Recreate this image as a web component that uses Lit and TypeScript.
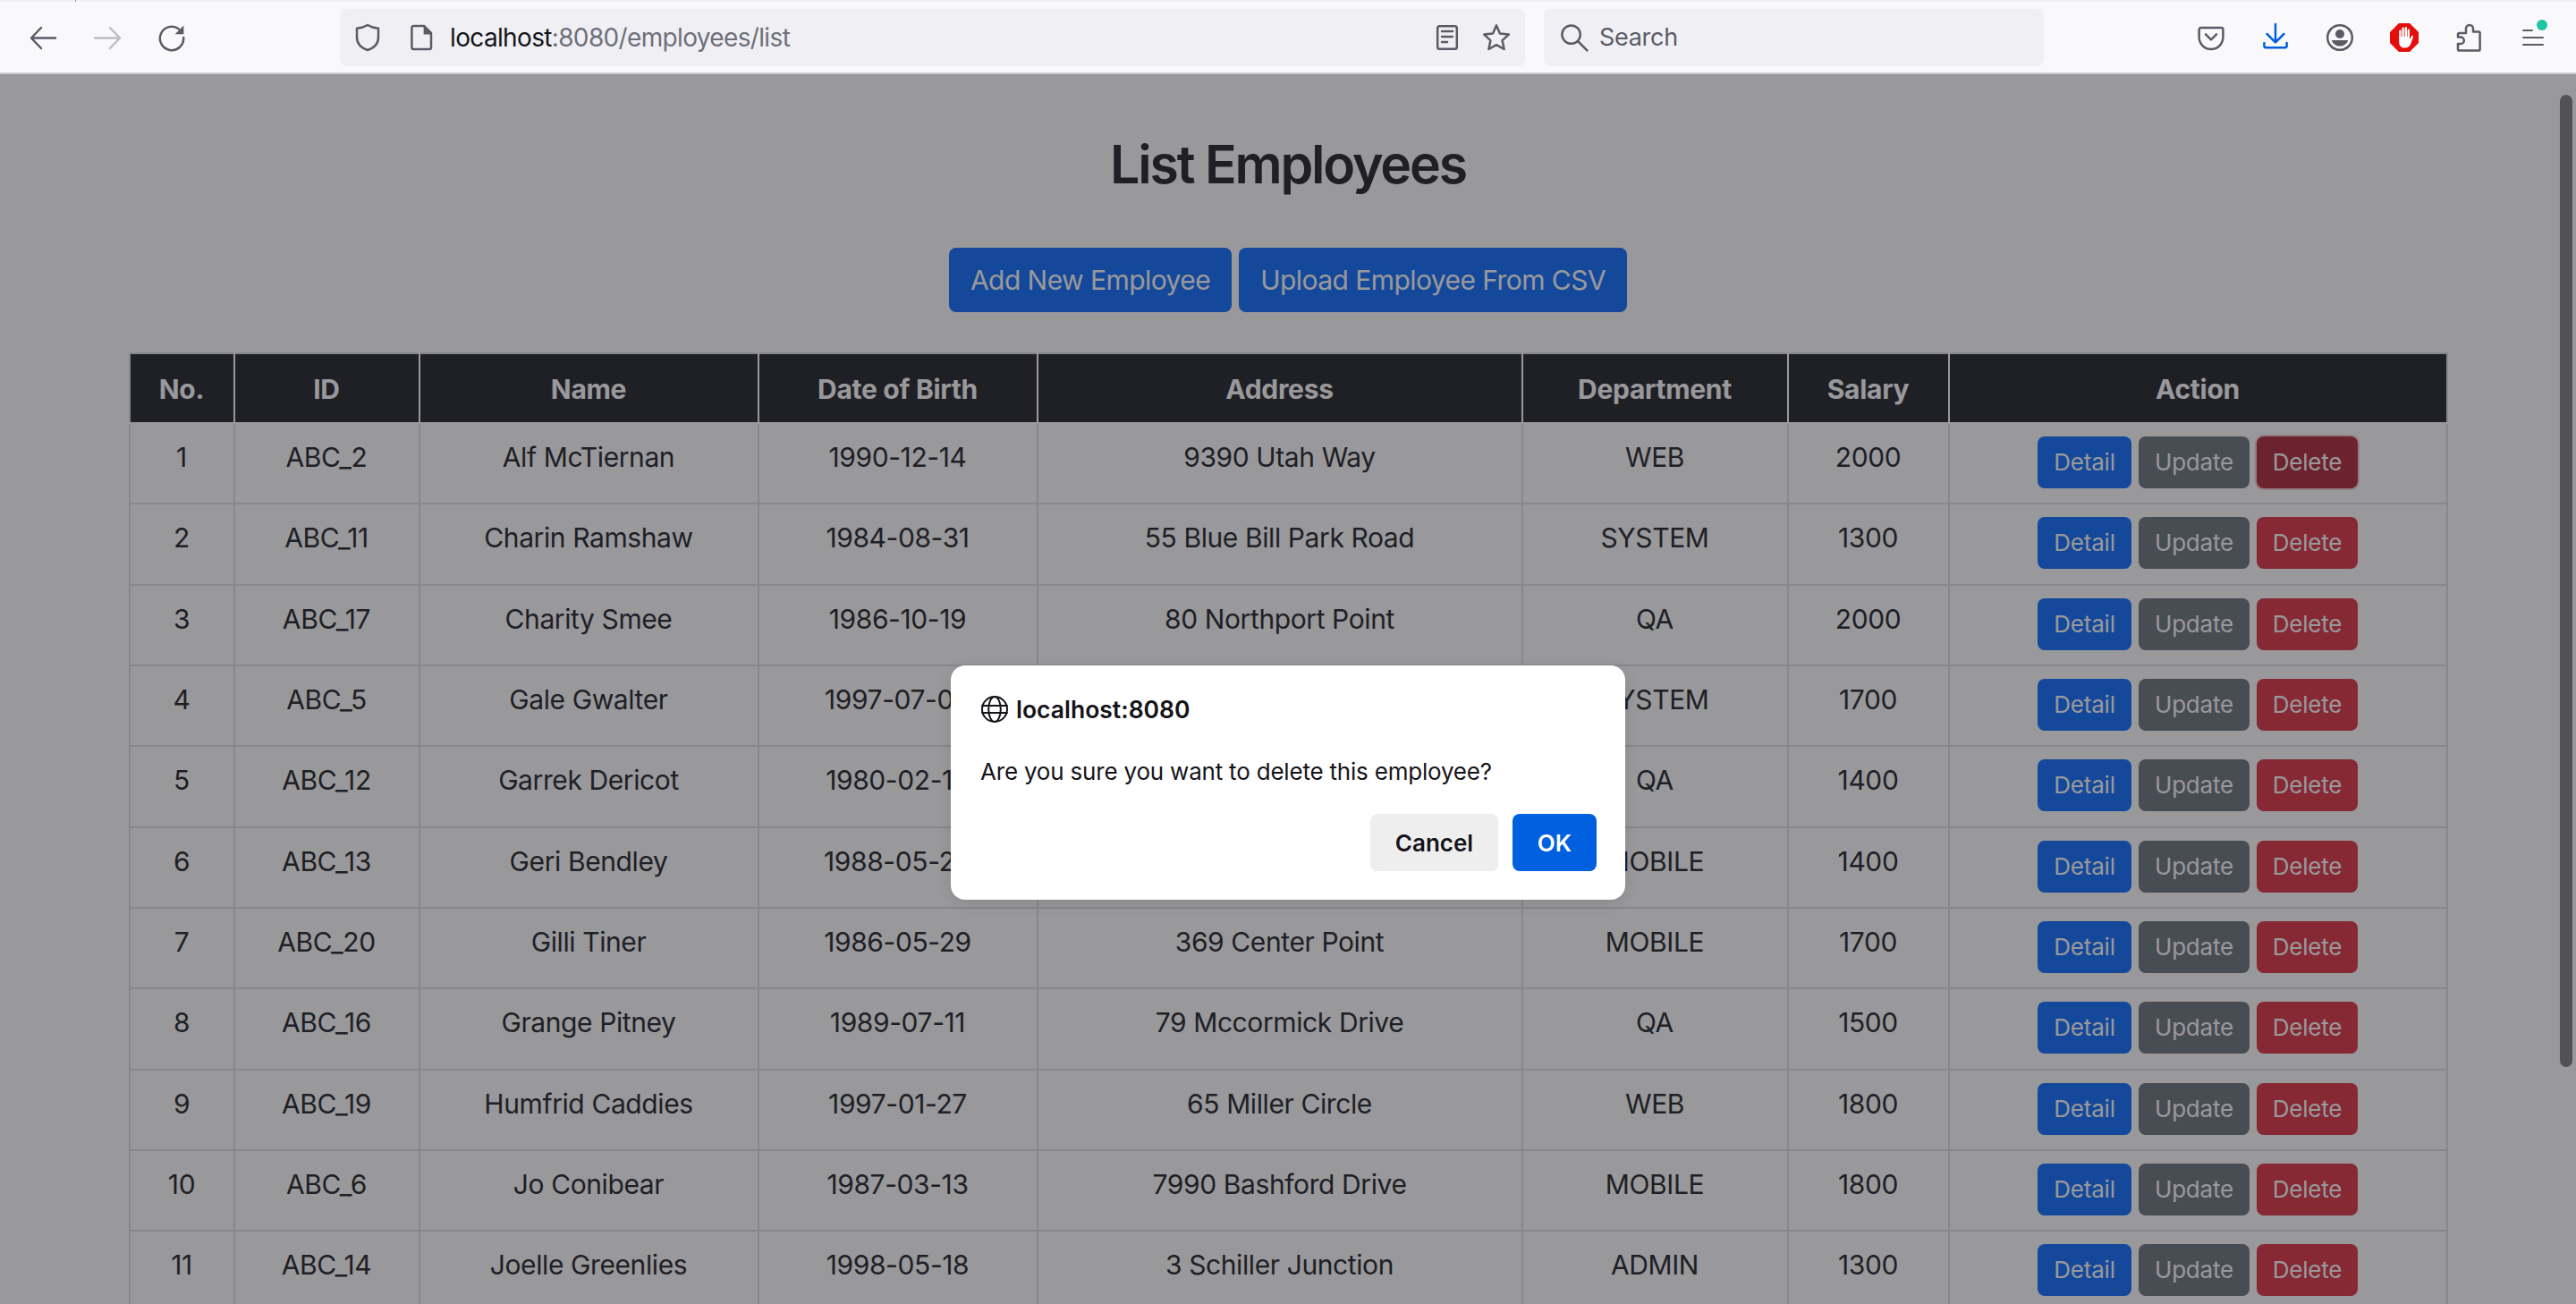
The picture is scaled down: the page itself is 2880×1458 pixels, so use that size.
import { LitElement, html, css, svg } from 'lit';
import { customElement } from 'lit/decorators.js';

const employees = [
  ['1', 'ABC_2', 'Alf McTiernan', '1990-12-14', '9390 Utah Way', 'WEB', '2000'],
  ['2', 'ABC_11', 'Charin Ramshaw', '1984-08-31', '55 Blue Bill Park Road', 'SYSTEM', '1300'],
  ['3', 'ABC_17', 'Charity Smee', '1986-10-19', '80 Northport Point', 'QA', '2000'],
  ['4', 'ABC_5', 'Gale Gwalter', '1997-07-04', '', 'SYSTEM', '1700'],
  ['5', 'ABC_12', 'Garrek Dericot', '1980-02-14', '', 'QA', '1400'],
  ['6', 'ABC_13', 'Geri Bendley', '1988-05-24', '', 'MOBILE', '1400'],
  ['7', 'ABC_20', 'Gilli Tiner', '1986-05-29', '369 Center Point', 'MOBILE', '1700'],
  ['8', 'ABC_16', 'Grange Pitney', '1989-07-11', '79 Mccormick Drive', 'QA', '1500'],
  ['9', 'ABC_19', 'Humfrid Caddies', '1997-01-27', '65 Miller Circle', 'WEB', '1800'],
  ['10', 'ABC_6', 'Jo Conibear', '1987-03-13', '7990 Bashford Drive', 'MOBILE', '1800'],
  ['11', 'ABC_14', 'Joelle Greenlies', '1998-05-18', '3 Schiller Junction', 'ADMIN', '1300'],
];

const headers = ['No.', 'ID', 'Name', 'Date of Birth', 'Address', 'Department', 'Salary', 'Action'];

const icon = (body: unknown, cls = '') => html`<svg class="icon ${cls}" viewBox="0 0 16 16">${body}</svg>`;

const icons = {
  back: svg`<path d="M15 8.25H1.5M7 2.5 1.5 8.25 7 14"/>`,
  forward: svg`<path d="M1 8.25h14M9.5 2.5 15 8.25 9.5 14"/>`,
  reload: svg`<path d="M12 3.2A6.6 6.6 0 1 0 14.6 8"/><path class="solid" d="M14.7 1.2v4.9H9.8z"/>`,
  shield: svg`<path d="M8 1c1.8 1.1 3.9 1.7 6 1.9v5c0 3.3-2.4 5.9-6 7.1-3.6-1.2-6-3.8-6-7.1v-5C4.100 2.700 6.200 2.100 8 1z"/>`,
  page: svg`<path d="M3.200 1.500h5.800l4 4v8a1 1 0 0 1-1 1H3.200a1 1 0 0 1-1-1v-11a1 1 0 0 1 1-1z"/><path class="solid" d="M8.800 1.500h.6l3.800 3.800v.9H8.800z"/>`,
  reader: svg`<rect x="2.600" y="1.600" width="10.800" height="12.800" rx="1.200"/><path d="M5 4.500h6M5 7.500h6M5 10.500h3"/>`,
  star: svg`<path d="M8 1.200 10 5.700l4.900.6-3.600 3.300 1 4.900L8 12.100 3.700 14.500l1-4.900L1.100 6.300 6 5.700z"/>`,
  search: svg`<circle cx="6.300" cy="6.300" r="5.100"/><path d="M10 10l5.200 5.200"/>`,
  pocket: svg`<path d="M2.300 2.500h11.400a1 1 0 0 1 1 1v4.300a6.700 6.700 0 0 1-13.400 0V3.500a1 1 0 0 1 1-1z"/><path d="M5 6.200 8 9.200l3-3"/>`,
  download: svg`<path d="M8 .5V10.500M3.300 6 8 10.700 12.700 6"/><path d="M1.700 11v1.600a1 1 0 0 0 1 1h10.600a1 1 0 0 0 1-1V11"/>`,
  account: svg`<circle cx="8" cy="8" r="6.900"/><circle class="solid" cx="8" cy="6" r="2.500"/><path class="solid" d="M3.400 9.500h9.200c-.6 2-2.400 3.300-4.600 3.300s-4-1.300-4.600-3.300z"/>`,
  puzzle: svg`<path d="M2 6.300a.8.8 0 0 1 .8-.8h3.700V3a2 2 0 0 1 4 0v1.700h3a.8.8 0 0 1 .8.8v9a.8.8 0 0 1-.8.8H2.800a.8.8 0 0 1-.8-.8v-3h1.500a1.900 1.900 0 0 0 0-3.800H2z"/>`,
  globe: svg`<circle cx="8" cy="8" r="7"/><ellipse cx="8" cy="8" rx="3.400" ry="7"/><path d="M1 6h14M1 10h14"/>`,
};

const stopHand = svg`
  <path class="octagon" d="M5 0h6l5 5v6l-5 5H5L0 11V5z"/>
  <path class="finger" d="M5.700 8V4.300M7.300 8V2.800M8.900 8V2.600M10.400 8V3.800"/>
  <path class="hand" d="M5.100 7.500H11v1.500l1-1.800c.3-.6 1.200-.3 1 .4l-1.300 3.700C11.200 13 10 13.800 8.300 13.800c-2 0-3.200-1.300-3.200-3.300z"/>
`;

@customElement('app-root')
export class AppRoot extends LitElement {
  static styles = css`
    :host {
      display: block;
      position: relative;
      height: 1458px;
      overflow: hidden;
      background: #fff;
      font-family: Inter, 'Liberation Sans', sans-serif;
      color: #212529;
    }
    .toolbar {
      display: flex;
      align-items: center;
      height: 83px;
      box-sizing: border-box;
      background: #f9f9fb;
      border-top: 2px solid #f0f0f4;
      border-bottom: 2px solid #ccccd0;
      padding: 0 20px 0 32px;
      position: relative;
    }
    .tab-edge {
      position: absolute;
      left: 84px;
      top: -2px;
      width: 1px;
      height: 2px;
      background: #8f8f9d;
    }
    .icon {
      width: 32px;
      height: 32px;
      flex: none;
      fill: none;
      stroke: #5b5b66;
      stroke-width: 1.25;
      stroke-linejoin: round;
      stroke-linecap: round;
    }
    .icon .solid {
      fill: #5b5b66;
      stroke: none;
    }
    .nav {
      display: flex;
      gap: 40px;
      width: 348px;
      flex: none;
    }
    .muted {
      stroke: #bdbdc2;
    }
    .field {
      display: flex;
      align-items: center;
      height: 64px;
      box-sizing: border-box;
      background: #f0f0f4;
      border-radius: 8px;
      flex: none;
    }
    .url {
      width: 1325px;
      padding: 0 16px 0 15px;
      margin-right: 21px;
    }
    .url .page {
      margin-left: 29px;
    }
    .address {
      margin-left: 15px;
      flex: 1;
      font-size: 28px;
      letter-spacing: -0.65px;
      color: #6f6f7a;
      white-space: nowrap;
    }
    .address b {
      font-weight: 400;
      color: #15141a;
    }
    .url .star {
      margin-left: 23px;
    }
    .search {
      width: 559px;
      padding-left: 18px;
    }
    .search span {
      margin-left: 12px;
      font-size: 27px;
      letter-spacing: -0.3px;
      color: #5b5b66;
    }
    .actions {
      margin-left: auto;
      display: flex;
      gap: 40px;
      margin-right: 12px;
      position: relative;
    }
    .download {
      stroke: #0060df;
    }
    .stop .octagon {
      fill: #e60d0d;
      stroke: none;
    }
    .stop .finger {
      stroke: #fff;
      stroke-width: 1.2;
    }
    .stop .hand {
      fill: #fff;
      stroke: none;
    }
    .menu {
      position: relative;
      width: 32px;
      height: 32px;
      flex: none;
    }
    .menu i {
      position: absolute;
      left: 4px;
      width: 24px;
      height: 2.5px;
      background: #5b5b66;
      border-radius: 1px;
    }
    .menu i:nth-child(1) {
      top: 7px;
      width: 12px;
    }
    .menu i:nth-child(2) {
      top: 15px;
    }
    .menu i:nth-child(3) {
      top: 23px;
    }
    .menu em {
      position: absolute;
      left: 20px;
      top: -4px;
      width: 12px;
      height: 12px;
      border-radius: 50%;
      background: #1fc4a3;
    }
    .page-body {
      padding-top: 66px;
    }
    h1 {
      margin: 0;
      text-align: center;
      font-size: 59px;
      line-height: 70px;
      font-weight: 600;
      letter-spacing: -2.2px;
    }
    .top-buttons {
      display: flex;
      justify-content: center;
      gap: 8px;
      margin-top: 58px;
      margin-bottom: 45px;
    }
    .btn {
      display: inline-flex;
      align-items: center;
      justify-content: center;
      box-sizing: border-box;
      border-radius: 8px;
      color: #fff;
      white-space: nowrap;
    }
    .btn-lg {
      height: 72px;
      font-size: 30px;
      letter-spacing: -0.55px;
      padding: 0 24px;
      background: #0d6efd;
    }
    .btn-sm {
      height: 58px;
      font-size: 26px;
      letter-spacing: -0.2px;
      padding: 0;
    }
    .detail {
      width: 105px;
      background: #0d6efd;
    }
    .update {
      width: 124px;
      background: #6c757d;
    }
    .delete {
      width: 113px;
      background: #dc3545;
    }
    .delete.focused {
      background: #b02a37;
      box-shadow: 0 0 0 2px rgba(225, 83, 97, 0.3);
    }
    table {
      width: 2593px;
      margin: 0 auto;
      border-collapse: collapse;
      table-layout: fixed;
      font-size: 30px;
    }
    th {
      box-sizing: border-box;
      height: 78px;
      padding: 2px 0 0;
      background: #212529;
      color: #fff;
      font-weight: 700;
      letter-spacing: -0.3px;
      border: 2px solid #fff;
      border-top-color: #dee2e6;
    }
    th:first-child {
      border-left-color: #dee2e6;
    }
    th:last-child {
      border-right-color: #dee2e6;
    }
    th:nth-child(1) { width: 117px; }
    th:nth-child(2) { width: 207px; }
    th:nth-child(3) { width: 379px; }
    th:nth-child(4) { width: 312px; }
    th:nth-child(5) { width: 542px; }
    th:nth-child(6) { width: 297px; }
    th:nth-child(7) { width: 180px; }
    td {
      height: 90.35px;
      box-sizing: border-box;
      padding: 15px 0 0;
      border: 2px solid #dee2e6;
      text-align: center;
      vertical-align: top;
      line-height: 44px;
      letter-spacing: -0.4px;
    }
    td.action-cell {
      padding-top: 14px;
      line-height: 0;
    }
    .row-buttons {
      display: flex;
      justify-content: center;
      gap: 8px;
    }
    .scrollbar {
      position: absolute;
      left: 2862px;
      top: 106px;
      width: 14px;
      height: 1087px;
      border-radius: 7px;
      background: rgba(0, 0, 0, 0.5);
    }
    .overlay {
      position: absolute;
      left: 0;
      right: 0;
      top: 83px;
      bottom: 0;
      background: rgba(28, 27, 34, 0.45);
    }
    .dialog {
      position: absolute;
      left: 1063px;
      top: 744px;
      width: 754px;
      height: 262px;
      box-sizing: border-box;
      padding: 33px 32px 32px 33px;
      background: #fff;
      border-radius: 16px;
      box-shadow: 0 4px 16px rgba(0, 0, 0, 0.1);
      display: flex;
      flex-direction: column;
      color: #15141a;
      font-size: 26px;
    }
    .dialog-title {
      display: flex;
      align-items: center;
      gap: 8px;
      font-size: 26.5px;
      font-weight: 600;
      line-height: 32px;
    }
    .dialog-title .icon {
      stroke: #15141a;
      width: 32px;
      height: 32px;
      stroke-width: 1;
    }
    .dialog-message {
      margin-top: 36px;
      line-height: 36px;
      letter-spacing: -0.2px;
    }
    .dialog-buttons {
      margin-top: auto;
      display: flex;
      justify-content: flex-end;
      gap: 16px;
    }
    .dialog-buttons div {
      height: 64px;
      display: flex;
      align-items: center;
      justify-content: center;
      border-radius: 8px;
      font-weight: 600;
    }
    .cancel {
      width: 143px;
      background: #eeeeef;
    }
    .ok {
      width: 94px;
      background: #0060df;
      color: #fff;
    }
  `;

  renderRow(row: string[], index: number) {
    return html`<tr>
      ${row.map((cell) => html`<td>${cell}</td>`)}
      <td class="action-cell">
        <div class="row-buttons">
          <span class="btn btn-sm detail">Detail</span>
          <span class="btn btn-sm update">Update</span>
          <span class="btn btn-sm delete ${index === 0 ? 'focused' : ''}">Delete</span>
        </div>
      </td>
    </tr>`;
  }

  render() {
    return html`
      <div class="toolbar">
        <div class="tab-edge"></div>
        <div class="nav">
          ${icon(icons.back)} ${icon(icons.forward, 'muted')} ${icon(icons.reload)}
        </div>
        <div class="field url">
          ${icon(icons.shield)} ${icon(icons.page, 'page')}
          <div class="address"><b>localhost</b>:8080/employees/list</div>
          ${icon(icons.reader)} ${icon(icons.star, 'star')}
        </div>
        <div class="field search">${icon(icons.search)}<span>Search</span></div>
        <div class="actions">
          ${icon(icons.pocket)} ${icon(icons.download, 'download')} ${icon(icons.account)}
          ${icon(stopHand, 'stop')} ${icon(icons.puzzle)}
          <div class="menu"><i></i><i></i><i></i><em></em></div>
        </div>
      </div>
      <div class="page-body">
        <h1>List Employees</h1>
        <div class="top-buttons">
          <span class="btn btn-lg">Add New Employee</span>
          <span class="btn btn-lg">Upload Employee From CSV</span>
        </div>
        <table>
          <thead>
            <tr>${headers.map((h) => html`<th>${h}</th>`)}</tr>
          </thead>
          <tbody>
            ${employees.map((row, i) => this.renderRow(row, i))}
          </tbody>
        </table>
      </div>
      <div class="scrollbar"></div>
      <div class="overlay"></div>
      <div class="dialog">
        <div class="dialog-title">${icon(icons.globe)}<span>localhost:8080</span></div>
        <div class="dialog-message">Are you sure you want to delete this employee?</div>
        <div class="dialog-buttons">
          <div class="cancel">Cancel</div>
          <div class="ok">OK</div>
        </div>
      </div>
    `;
  }
}
